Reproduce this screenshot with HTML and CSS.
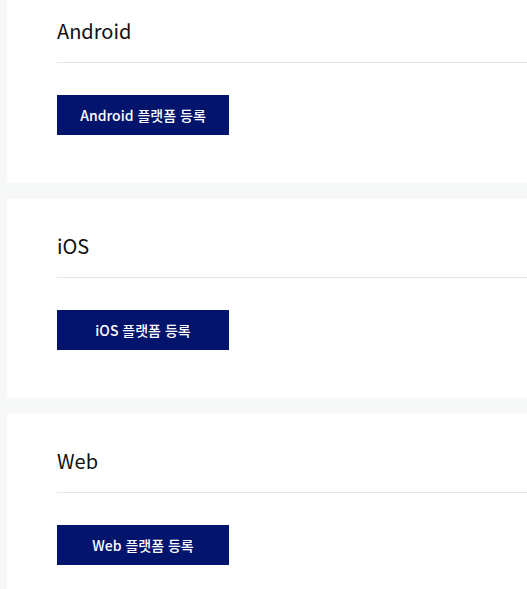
FILE: index.html
```html
<!DOCTYPE html>
<html lang="ko">
   <head>
      <meta charset="UTF-8">
      <meta name="viewport" content="width=device-width, initial-scale=1.0">
      <title>플랫폼</title>
      <link rel="stylesheet" href="styles.css">
   </head>
   <body>
      <main>
         <section class="platform">
            <h2>Android</h2>
            <button type="button">Android 플랫폼 등록</button>
         </section>
         <section class="platform">
            <h2>iOS</h2>
            <button type="button">iOS 플랫폼 등록</button>
         </section>
         <section class="platform">
            <h2>Web</h2>
            <button type="button">Web 플랫폼 등록</button>
         </section>
      </main>
   </body>
</html>
```

FILE: styles.css
```css
* {
box-sizing: border-box;
}
body {
margin: 0;
background-color: #f7f9f9;
font-family: "Noto Sans CJK KR", sans-serif;
color: #111;
overflow: hidden;
}
main {
display: flex;
flex-direction: column;
gap: 16px;
padding-left: 7px;
}
.platform {
padding: 32px 0 48px 50px;
background-color: #fff;
}
.platform:first-child {
padding-top: 16px;
}
h2 {
margin: 0 0 32px;
padding-bottom: 16px;
border-bottom: 1px solid #e5e5e5;
font-size: 20px;
font-weight: 400;
line-height: 30px;
}
button {
display: block;
width: 172px;
height: 40px;
padding: 0;
border: none;
background-color: #02146b;
color: #fff;
font-family: inherit;
font-size: 14px;
font-weight: 500;
cursor: pointer;
}
button:hover {
background-color: #010d4a;
}
```
